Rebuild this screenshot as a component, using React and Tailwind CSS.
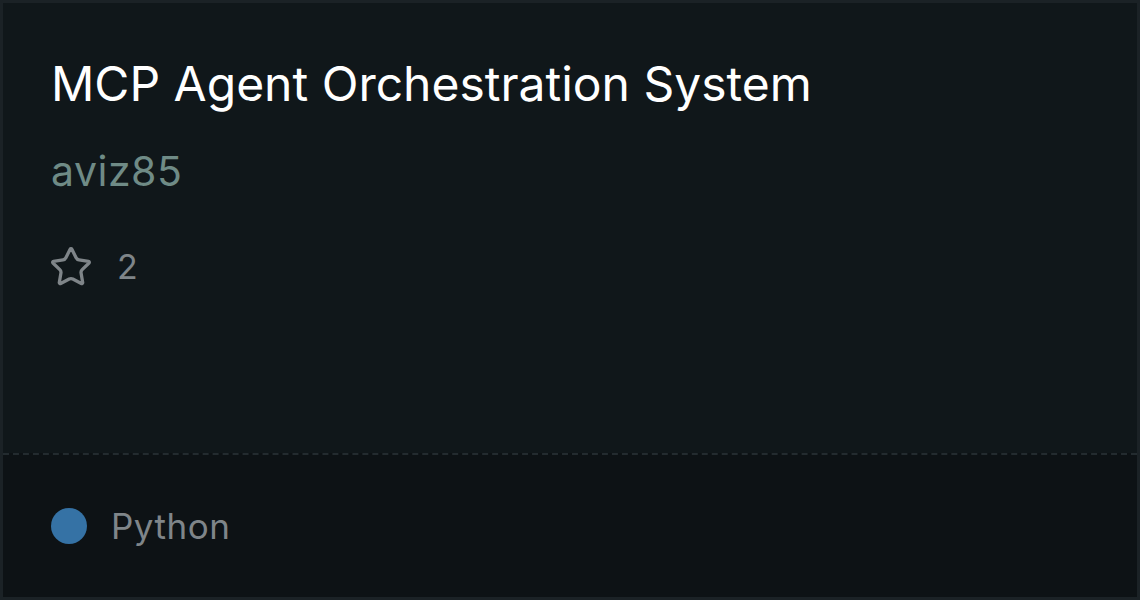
import { Star } from 'lucide-react';

export default function App() {
  return (
    <div className="w-[1140px] h-[600px] bg-[#0d1215] p-0 font-['Inter',sans-serif]">
      <div className="w-full h-full border-[3px] border-[#1b2226] flex flex-col">
        {/* Top - repo info */}
        <div className="flex-1 bg-[#10171a] px-[48px] pt-[52px]">
          <h1 className="text-[48px] leading-[58px] text-white font-normal">
            MCP Agent Orchestration System
          </h1>
          <div className="mt-[34px] text-[41px] leading-[48px] tracking-[0.5px] text-[#6f8b86]">aviz85</div>
          <div className="mt-[52px] flex items-center gap-[24px] h-[40px] text-[#7f8589]">
            <Star size={44} strokeWidth={1.8} className="-ml-[2px]" />
            <span className="text-[34px] leading-[40px]">2</span>
          </div>
        </div>

        {/* Footer - language */}
        <div className="h-[144px] border-t-2 border-dashed border-[#232b2f] bg-[#0d1215] px-[48px] flex items-center">
          <div className="flex items-center gap-[24px]">
            <span className="w-[36px] h-[36px] rounded-full bg-[#3572a5]" />
            <span className="text-[35px] leading-[40px] tracking-[0.5px] text-[#7f8589]">Python</span>
          </div>
        </div>
      </div>
    </div>
  );
}
